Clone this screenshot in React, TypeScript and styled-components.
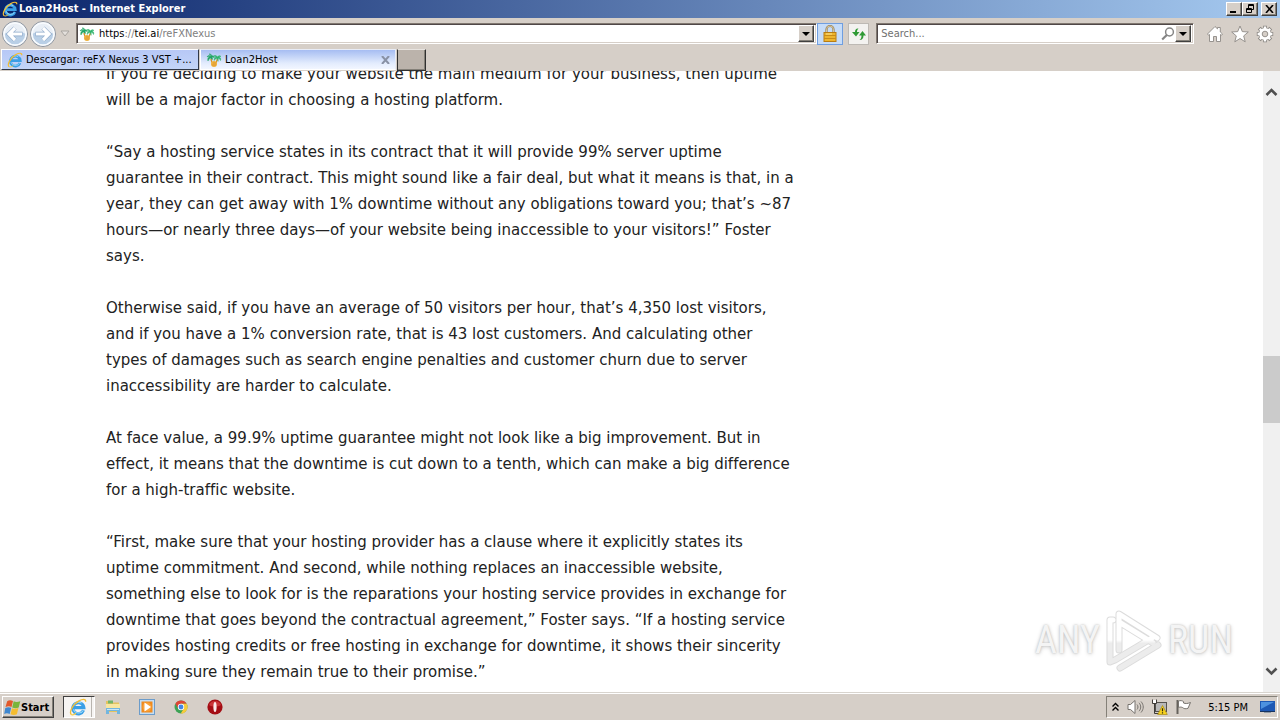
import React from "react";
import styled, { createGlobalStyle, css } from "styled-components";

const face = "#d6cfc8";
const uiFont = `"DejaVu Sans Condensed", "DejaVu Sans", sans-serif`;

const raised = css`
  border: 1px solid;
  border-color: #ffffff #404040 #404040 #ffffff;
  box-shadow: inset -1px -1px 0 #848078;
`;

const GlobalStyle = createGlobalStyle`
  * { box-sizing: border-box; }
  body { margin: 0; background: #ffffff; font-family: ${uiFont}; font-size: 11px; color: #000000; font-variant-ligatures: none; }
  button, input { font: inherit; color: inherit; padding: 0; margin: 0; }
  svg { display: block; flex: none; }
`;

const Desktop = styled.div`
  display: flex;
  flex-direction: column;
  height: 100vh;
  min-width: 900px;
  overflow: hidden;
`;

const TitleBar = styled.header`
  display: flex;
  align-items: center;
  gap: 1px;
  height: 18px;
  padding: 0 3px 0 2px;
  background: linear-gradient(90deg, #0a246a, #a6caf0);
`;

const Title = styled.h1`
  flex: 1;
  margin: 0;
  font-size: 11px;
  line-height: 18px;
  font-weight: bold;
  color: #ffffff;
`;

const WindowButton = styled.button<{ $apart?: boolean }>`
  ${raised}
  display: flex;
  align-items: center;
  justify-content: center;
  width: 16px;
  height: 14px;
  margin-left: ${(p) => (p.$apart ? "2px" : "-1px")};
  background: ${face};
`;

const NavBar = styled.nav`
  display: flex;
  align-items: center;
  height: 31px;
  padding: 0 6px 0 1px;
  background: ${face};
`;

const PlainButton = styled.button`
  display: flex;
  align-items: center;
  justify-content: center;
  border: 0;
  background: none;
`;

const Field = styled.div<{ $grow: number }>`
  display: flex;
  align-items: center;
  flex: ${(p) => p.$grow} 1 0;
  height: 21px;
  padding: 0 2px;
  background: #ffffff;
  border: 1px solid;
  border-color: #807870 #ffffff #ffffff #807870;
  box-shadow: inset 1px 1px 0 #504848, inset -1px -1px 0 ${face};
`;

const Address = styled.div`
  flex: 1;
  padding-left: 4px;
  line-height: 16px;
  color: #808080;
  b { font-weight: normal; color: #000000; }
`;

const SearchInput = styled.input`
  flex: 1;
  min-width: 0;
  border: 0;
  padding-left: 2px;
  outline: 0;
  background: none;
  &::placeholder { color: #707070; opacity: 1; }
`;

const DropButton = styled.button`
  ${raised}
  display: flex;
  align-items: center;
  justify-content: center;
  width: 16px;
  height: 17px;
  background: ${face};
`;

const SquareButton = styled.button<{ $active?: boolean }>`
  display: flex;
  align-items: center;
  justify-content: center;
  width: ${(p) => (p.$active ? "26px" : "21px")};
  height: 22px;
  border: 1px solid ${(p) => (p.$active ? "#6f9ee0" : "#bdb9b4")};
  background: ${(p) => (p.$active ? "#c6dcf8" : "#f3f2f0")};
`;

const Fields = styled.div`
  display: flex;
  align-items: center;
  flex: 1;
`;

const FieldActions = styled.div`
  display: flex;
  gap: 5px;
  padding: 0 7px 0 0;
`;

const Tools = styled.div`
  display: flex;
  gap: 7px;
  padding-left: 12px;
`;

const TabRow = styled.div`
  display: flex;
  height: 22px;
  padding-left: 1px;
  gap: 1px;
  background: ${face};
`;

const Tab = styled.button<{ $selected?: boolean }>`
  display: flex;
  align-items: center;
  gap: 3px;
  width: ${(p) => (p.$selected ? "196px" : "198px")};
  height: 21px;
  padding: 2px 5px;
  text-align: left;
  border: 1px solid;
  border-color: ${(p) => (p.$selected ? "#e8ecf6 #e8ecf6 #ffffff #ffffff" : "#ffffff #303848 #303848 #ffffff")};
  background: ${(p) =>
    p.$selected ? "linear-gradient(#a6bdf2, #e3ecfd 70%, #f2f6ff)" : "linear-gradient(#b7c8f6, #c3d5f8)"};
  span { flex: 1; white-space: nowrap; }
`;

const NewTab = styled.button`
  ${raised}
  width: 29px;
  height: 22px;
  border-color: #303030;
  border-top-color: #e8e4e0;
  background: #bbb3ab;
`;

const Viewport = styled.main`
  position: relative;
  display: flex;
  flex: 1;
  min-height: 0;
  overflow: hidden;
  background: #ffffff;
`;

const Article = styled.article`
  flex: 1;
  margin-top: -10px;
  padding-left: 106px;
  font-family: Verdana, "DejaVu Sans", sans-serif;
  font-size: 15px;
  line-height: 26px;
  color: #222222;
`;

const Paragraph = styled.p`
  margin: 0 0 26px;
  white-space: pre;
`;

const ScrollBar = styled.div`
  display: flex;
  flex-direction: column;
  width: 17px;
  background: #f0f0f0;
`;

const ScrollButton = styled(PlainButton)`
  width: 17px;
  height: 42px;
`;

const Track = styled.div<{ $grow: number }>`
  flex: ${(p) => p.$grow} 1 0;
`;

const Thumb = styled.div`
  height: 67px;
  background: #cbcbcb;
`;

const Watermark = styled.div`
  position: absolute;
  right: 47px;
  bottom: 20px;
  display: flex;
  align-items: center;
  gap: 3px;
  height: 64px;
  font-family: "Roboto Condensed", "Open Sans Condensed", "Liberation Sans", sans-serif;
  font-size: 38px;
  line-height: 64px;
  color: #f4f4f4;
  text-shadow: 0 0 2px #bcbcbc, 0 1px 4px #cccccc;
`;

const TaskBar = styled.footer`
  display: flex;
  align-items: center;
  height: 28px;
  padding: 1px 2px 0;
  border-top: 1px solid #d8d4ce;
  box-shadow: inset 0 1px 0 #ffffff;
  background: ${face};
`;

const StartButton = styled.button`
  ${raised}
  display: flex;
  align-items: center;
  width: 52px;
  height: 22px;
  padding-left: 1px;
  font-weight: bold;
  background: ${face};
`;

const Launchers = styled.div`
  display: flex;
  align-items: center;
  flex: 1;
  gap: 10px;
  padding-left: 9px;
`;

const Launcher = styled(PlainButton)<{ $pressed?: boolean }>`
  width: 24px;
  height: 22px;
  ${(p) =>
    p.$pressed &&
    css`
      width: 32px;
      margin-right: -4px;
      padding-right: 3px;
      border: 1px solid;
      border-color: #404040 #ffffff #ffffff #404040;
      background: linear-gradient(90deg, #f6f4f2 27px, #b8b4ae 27px, #b8b4ae 28px, #f6f4f2 28px);
    `}
`;

const Tray = styled.div`
  display: flex;
  align-items: center;
  gap: 7px;
  height: 22px;
  padding: 0 1px 0 4px;
  border: 1px solid;
  border-color: #848078 #ffffff #ffffff #848078;
`;

const Clock = styled.time`
  padding: 0 4px 0 9px;
  white-space: nowrap;
`;

const IeIcon = ({ size = 16 }: { size?: number }) => (
  <svg width={size} height={size} viewBox="0 0 16 16" fill="none">
    <path d="M12.900 10.900A4.900 4.900 0 1 1 13.200 8.600H4.6" stroke="#3a9fe6" strokeWidth="2.800" />
    <path d="M12.700 11.100a4.900 4.900 0 0 1-8.800-1M4 7a4.900 4.900 0 0 1 7.200-2.400" stroke="#9bdcfb" strokeWidth=".9" />
    <path d="M2.400 14.800C-.8 13.700 3.400 5.500 8.800 2.600 11.900.9 15.100.5 14.800 3.300" stroke="#f2bd35" strokeWidth="1.200" />
    <path d="M2.400 14.800c1.200.5 2.700-.3 3.900-1.200" stroke="#f5cd45" strokeWidth="1" />
  </svg>
);

const PalmIcon = () => (
  <svg width="16" height="16" viewBox="0 0 16 16" fill="none">
    <path d="M5 4.500C3.500 3 1.500 3.500 1 5c1.200-.6 2-.5 2.600-.2C2 5.500 1.300 7 2 9c.7-1.800 1.700-2.700 2.700-3 .6.700.8 1.700.6 3C6.800 7.500 6.800 6 6 5c.9-.3 1.700 0 2.300.9C8.300 4.200 7 3.300 5.700 3.800 5.600 2.500 4.500 1.700 3 2c1.200.6 1.900 1.400 2 2.500z" fill="#22a565" stroke="#22a565" strokeWidth=".5" />
    <path d="M11.500 5c-.9-1.700-2.700-2-4-1 1.200.1 2.200.6 2.800 1.300C8.700 5.500 7.900 6.900 8.200 8.500c.8-1.400 1.700-2 2.700-2.200-.1 1.200.3 2.200 1.200 3 .3-1.200.2-2.100-.2-3 1.300.1 2.100.8 2.600 2.200.8-2-.2-3.300-1.900-3.500.7-.6 1.400-.7 2.400-.4-.8-1.300-2.500-1.300-3.500.4z" fill="#2fb46c" stroke="#2fb46c" strokeWidth=".5" />
    <path d="M5 7c.2 2.300 1 4 2.500 5.500M11 7.500c0 2-.8 3.700-2.200 5" stroke="#d9932d" strokeWidth="1.300" />
    <circle cx="8" cy="12" r="3" fill="#efb13b" />
    <path d="M6 13h4M7 11h3" stroke="#d8953a" strokeWidth=".8" />
  </svg>
);

const ArrowDisc = ({ forward }: { forward?: boolean }) => (
  <svg width="28" height="28" viewBox="0 0 28 28" fill="none">
    <circle cx="14" cy="14" r="12.500" fill="#e9eff6" stroke="#8d949e" />
    <path d="M3 14a11 11 0 0 0 22 0c-5-3-17-3-22 0z" fill="#b9cfe6" />
    <circle cx="14" cy="14" r="11" stroke="#f8fbfe" strokeWidth="1.500" />
    <g transform={forward ? "matrix(-1 0 0 1 28 0)" : undefined}>
      <path d="M21.500 14H9M14 8l-6 6 6 6" stroke="#8da8c8" strokeWidth="4.400" />
      <path d="M21 14H9M14 8l-6 6 6 6" stroke="#ffffff" strokeWidth="3.200" />
    </g>
  </svg>
);

const DownTriangle = () => (
  <svg width="8" height="4" viewBox="0 0 8 4"><path d="M0 0h8L4 4z" /></svg>
);

const Chevron = ({ down }: { down?: boolean }) => (
  <svg width="13" height="9" viewBox="0 0 13 9" fill="none">
    <path d={down ? "M1.500 1.500l5 5 5-5" : "M1.500 7l5-5 5 5"} stroke="#505050" strokeWidth="2.600" />
  </svg>
);

const LockIcon = () => (
  <svg width="14" height="17" viewBox="0 0 14 17" fill="none">
    <path d="M3.500 8V4.500a3.500 3.500 0 0 1 7 0V8" stroke="#96815a" strokeWidth="2.200" />
    <path d="M3.500 8V4.500a3.500 3.500 0 0 1 7 0V8" stroke="#e7d7a9" strokeWidth=".8" />
    <rect x="1" y="7.500" width="12" height="9" fill="#eeb52e" stroke="#b87c12" />
    <path d="M1 10.500h12M1 13.500h12" stroke="#c98c18" />
    <path d="M3 9h6" stroke="#fbe28a" />
  </svg>
);

const RefreshIcon = () => (
  <svg width="16" height="16" viewBox="0 0 16 16" fill="none">
    <path d="M7.500 2.500C5.500 2 4 3.500 4 6H1l4 4.500L8.500 6H6c0-1.500.4-2.700 1.500-3.500z" fill="#2f9a35" />
    <path d="M8.500 14c2.500.2 4-1.500 4-4.500H15L11.500 5 8 9.500h2.500c0 2-.6 3.500-2 4.500z" fill="#2f9a35" />
  </svg>
);

const MagnifierIcon = () => (
  <svg width="14" height="14" viewBox="0 0 14 14" fill="none" stroke="#858585">
    <circle cx="8.500" cy="5" r="3.900" strokeWidth="1.500" />
    <path d="M5.800 8L1.200 12.500" strokeWidth="2.200" />
  </svg>
);

const toolPaths = {
  home: "M1.500 9L9 1.500l2.500 2.400V2.500h2.800V7l2.200 2-1.200 1.300-.8-.8v7h-4v-5h-3v5h-4v-7l-.8.8z",
  star: "M9 1l2.300 5.600 6 .4-4.600 3.900 1.500 5.900L9 13.500l-5.200 3.300 1.500-5.900L.7 7l6-.4z",
};

const ToolIcon = ({ name }: { name: "home" | "star" }) => (
  <svg width="18" height="18" viewBox="0 0 18 18">
    <path d={toolPaths[name]} fill="#ffffff" stroke="#8d8984" strokeWidth=".9" />
  </svg>
);

const GearIcon = () => (
  <svg width="18" height="18" viewBox="0 0 18 18" fill="none">
    <g stroke="#8d8984" strokeWidth="4">
      <path d="M9 .8v16.400M.8 9h16.400M3.200 3.200l11.600 11.600M14.800 3.200L3.200 14.800" />
    </g>
    <circle cx="9" cy="9" r="6.500" fill="#8d8984" />
    <path d="M9 1.600v14.800M1.600 9h14.800M3.800 3.800l10.400 10.400M14.200 3.800L3.800 14.200" stroke="#ffffff" strokeWidth="2.400" />
    <circle cx="9" cy="9" r="4.500" stroke="#ffffff" strokeWidth="2.800" />
    <circle cx="9" cy="9" r="2.800" fill="#d6cfc8" stroke="#8d8984" strokeWidth=".9" />
  </svg>
);

const WindowsFlag = () => (
  <svg width="17" height="17" viewBox="0 0 17 17">
    <path d="M3.200 2.200C5 1 6.800 1 9 2L7.500 8C5.500 7 3.800 7.100 1.500 8.100z" fill="#e2592b" />
    <path d="M9.700 2.300c2 1 4 .9 6.600-.1l-1.600 6.300c-2.200 1-4.100 1-6.500 0z" fill="#79b53c" />
    <path d="M1.300 8.900c2.200-1 4-1 5.900-.1l-1.500 6.100c-2-.9-3.800-.9-5.500.1z" fill="#3f87cf" />
    <path d="M8 9.200c2.100.9 4 .9 6.400-.1l-1.500 6.200c-2.200 1-4.200.9-6.400 0z" fill="#f5bd30" />
  </svg>
);

const FolderIcon = () => (
  <svg width="18" height="18" viewBox="0 0 18 18">
    <path d="M2 3h5l1 1.500h7V14H2z" fill="#e4c35f" />
    <path d="M4 2.500h5v3H4z" fill="#72b569" />
    <path d="M2 6h14v5H2z" fill="#f8e6a0" />
    <path d="M2 10h14v6h-3v-3H5v3H2z" fill="#72b6df" />
    <path d="M3 11h12v1H3z" fill="#c9e7f8" />
  </svg>
);

const MediaIcon = () => (
  <svg width="18" height="18" viewBox="0 0 18 18">
    <rect x="1.500" y="1.500" width="15" height="15" fill="#c5ddf2" stroke="#6c9cca" />
    <rect x="3.500" y="3.500" width="11" height="11" fill="#f08a1d" />
    <circle cx="9" cy="9" r="4.500" fill="#f9a23a" />
    <path d="M6.500 4.500v9l6.500-4.500z" fill="#ffffff" />
  </svg>
);

const ChromeIcon = () => (
  <svg width="16" height="16" viewBox="0 0 16 16">
    <circle cx="8" cy="8" r="6.500" fill="#3da255" />
    <path d="M2.400 4.700A6.500 6.500 0 0 1 13.700 4.800H8L5.200 9.600z" fill="#de4536" />
    <path d="M13.700 4.800A6.500 6.500 0 0 1 7.700 14.500L10.800 9.600 8 4.800z" fill="#f7cb3b" />
    <circle cx="8" cy="8" r="3.200" fill="#ffffff" />
    <circle cx="8" cy="8" r="2.400" fill="#4285e4" />
  </svg>
);

const OperaIcon = () => (
  <svg width="16" height="16" viewBox="0 0 16 16">
    <circle cx="8" cy="8" r="7.600" fill="#a40d14" />
    <path d="M2 6a6.500 6.500 0 0 1 12 0c-3 2-9 2-12 0z" fill="#c93438" />
    <ellipse cx="8" cy="8" rx="1.600" ry="5" fill="#fbeaea" />
  </svg>
);

const SpeakerIcon = () => (
  <svg width="17" height="16" viewBox="0 0 17 16" fill="none" stroke="#77736e">
    <path d="M1 5.500h2.500L8 1.500v13l-4.500-4H1z" fill="#ffffff" />
    <path d="M10 5.500c1.300 1.500 1.300 3.500 0 5M12 3.800c2.300 2.500 2.300 5.900 0 8.400M14 2.500c3 3.500 3 7.500 0 11" />
  </svg>
);

const NetworkIcon = () => (
  <svg width="17" height="16" viewBox="0 0 17 16" fill="none">
    <rect x="4.500" y="3.500" width="11" height="9" fill="#b8b8b8" stroke="#55524e" />
    <path d="M1.500.5v4h4v-4M3.500 1v3M3.500 4.500v10H8" stroke="#3e3b38" />
    <path d="M2 1h3v3H2z" fill="#ffffff" />
    <path d="M11.500 6.500l4.800 9H6.700z" fill="#f7d21e" stroke="#a78a12" strokeWidth=".7" />
    <path d="M11.500 9.300v3M11.500 13.300v1.200" stroke="#302a10" strokeWidth="1.200" />
  </svg>
);

const FlagIcon = () => (
  <svg width="17" height="16" viewBox="0 0 17 16" fill="none">
    <path d="M2.500 1v14" stroke="#66625d" strokeWidth="2" />
    <path d="M3.500 2c2-.7 3.500-.5 5 .6V4c2 .8 4.200.7 7-.5l-2.500 5.800c-2.500.8-4 .5-5.500-.8-1.500-.6-2.700-.5-4 0z" fill="#ffffff" stroke="#77736e" />
  </svg>
);

const DesktopIcon = () => (
  <svg width="17" height="16" viewBox="0 0 17 16">
    <path d="M1 2h15v10H1z" fill="#1d58b4" />
    <path d="M2 3h13L2 10z" fill="#4d91df" />
    <path d="M1 12h15v1H1z" fill="#17335f" />
    <path d="M5 13h7v1H5z" fill="#8f99a6" />
  </svg>
);

const PlayMark = () => (
  <svg width="62" height="64" viewBox="0 0 62 64" fill="none" strokeLinejoin="round" strokeLinecap="round">
    <defs>
      <linearGradient id="markFill" gradientUnits="userSpaceOnUse" x1="0" y1="0" x2="0" y2="64">
        <stop offset=".5" stopColor="#ffffff" />
        <stop offset=".55" stopColor="#ececec" />
      </linearGradient>
    </defs>
    <g stroke="#dcdcdc" strokeWidth="7">
      <path d="M10 12H7v42l5-2 37-22" />
      <path d="M16 42V6l38 24M16 14l34 21" />
      <path d="M17 60l38-23" />
    </g>
    <g stroke="url(#markFill)" strokeWidth="5">
      <path d="M10 12H7v42l5-2 37-22" />
      <path d="M16 42V6l38 24M16 14l34 21" />
      <path d="M17 60l38-23" />
    </g>
  </svg>
);

const paragraphs = [
  `If you’re deciding to make your website the main medium for your business, then uptime
will be a major factor in choosing a hosting platform.`,
  `“Say a hosting service states in its contract that it will provide 99% server uptime
guarantee in their contract. This might sound like a fair deal, but what it means is that, in a
year, they can get away with 1% downtime without any obligations toward you; that’s ~87
hours—or nearly three days—of your website being inaccessible to your visitors!” Foster
says.`,
  `Otherwise said, if you have an average of 50 visitors per hour, that’s 4,350 lost visitors,
and if you have a 1% conversion rate, that is 43 lost customers. And calculating other
types of damages such as search engine penalties and customer churn due to server
inaccessibility are harder to calculate.`,
  `At face value, a 99.9% uptime guarantee might not look like a big improvement. But in
effect, it means that the downtime is cut down to a tenth, which can make a big difference
for a high-traffic website.`,
  `“First, make sure that your hosting provider has a clause where it explicitly states its
uptime commitment. And second, while nothing replaces an inaccessible website,
something else to look for is the reparations your hosting service provides in exchange for
downtime that goes beyond the contractual agreement,” Foster says. “If a hosting service
provides hosting credits or free hosting in exchange for downtime, it shows their sincerity
in making sure they remain true to their promise.”`,
];

export default function App() {
  return (
    <Desktop>
      <GlobalStyle />
      <TitleBar>
        <IeIcon />
        <Title>Loan2Host - Internet Explorer</Title>
        <WindowButton aria-label="Minimize">
          <svg width="10" height="8" viewBox="0 0 10 8"><path d="M1 6h6v2H1z" /></svg>
        </WindowButton>
        <WindowButton aria-label="Restore">
          <svg width="10" height="10" viewBox="0 0 10 10" fill="none" stroke="#000000">
            <path d="M3.500 4V.5h5v5H7M3 1.500h6M1.500 4.500h5v4h-5zM1 5.500h6" />
          </svg>
        </WindowButton>
        <WindowButton aria-label="Close" $apart>
          <svg width="9" height="8" viewBox="0 0 9 8"><path d="M1 0l7 8M8 0L1 8" stroke="#000000" strokeWidth="1.600" /></svg>
        </WindowButton>
      </TitleBar>
      <NavBar>
        <PlainButton aria-label="Back"><ArrowDisc /></PlainButton>
        <PlainButton aria-label="Forward"><ArrowDisc forward /></PlainButton>
        <PlainButton aria-label="Recent pages">
          <svg width="19" height="7" viewBox="0 0 19 7"><path d="M4 1h8L8 6z" fill="#e4e0dc" stroke="#aaa6a1" /></svg>
        </PlainButton>
        <Fields>
          <Field $grow={743}>
            <PalmIcon />
            <Address><b>https</b>://<b>tei.ai</b>/reFXNexus</Address>
            <DropButton aria-label="Show addresses"><DownTriangle /></DropButton>
          </Field>
          <FieldActions>
            <SquareButton aria-label="Security report" $active><LockIcon /></SquareButton>
            <SquareButton aria-label="Refresh"><RefreshIcon /></SquareButton>
          </FieldActions>
          <Field $grow={315}>
            <SearchInput aria-label="Search" placeholder="Search..." />
            <PlainButton aria-label="Run search"><MagnifierIcon /></PlainButton>
            <DropButton aria-label="Search providers"><DownTriangle /></DropButton>
          </Field>
        </Fields>
        <Tools>
          <PlainButton aria-label="Home"><ToolIcon name="home" /></PlainButton>
          <PlainButton aria-label="Favorites"><ToolIcon name="star" /></PlainButton>
          <PlainButton aria-label="Tools"><GearIcon /></PlainButton>
        </Tools>
      </NavBar>
      <TabRow>
        <Tab><IeIcon /><span>Descargar: reFX Nexus 3 VST +...</span></Tab>
        <Tab $selected>
          <PalmIcon />
          <span>Loan2Host</span>
          <svg width="9" height="8" viewBox="0 0 9 8"><path d="M1 0l7 8M8 0L1 8" stroke="#8991a5" strokeWidth="2" /></svg>
        </Tab>
        <NewTab aria-label="New tab" />
      </TabRow>
      <Viewport>
        <Article>
          {paragraphs.map((text) => (
            <Paragraph key={text}>{text}</Paragraph>
          ))}
        </Article>
        <ScrollBar>
          <ScrollButton aria-label="Scroll up"><Chevron /></ScrollButton>
          <Track $grow={243} />
          <Thumb />
          <Track $grow={227} />
          <ScrollButton aria-label="Scroll down"><Chevron down /></ScrollButton>
        </ScrollBar>
        <Watermark>
          <span>ANY</span>
          <PlayMark />
          <span>RUN</span>
        </Watermark>
      </Viewport>
      <TaskBar>
        <StartButton><WindowsFlag />Start</StartButton>
        <Launchers>
          <Launcher aria-label="Internet Explorer" $pressed><IeIcon size={18} /></Launcher>
          <Launcher aria-label="File Explorer"><FolderIcon /></Launcher>
          <Launcher aria-label="Media Player"><MediaIcon /></Launcher>
          <Launcher aria-label="Chrome"><ChromeIcon /></Launcher>
          <Launcher aria-label="Opera"><OperaIcon /></Launcher>
        </Launchers>
        <Tray>
          <PlainButton aria-label="Show hidden icons">
            <svg width="9" height="10" viewBox="0 0 9 10" fill="none" stroke="#000000" strokeWidth="1.400">
              <path d="M1.500 4.500l3-3 3 3M1.500 8.500l3-3 3 3" />
            </svg>
          </PlainButton>
          <SpeakerIcon />
          <NetworkIcon />
          <FlagIcon />
          <Clock>5:15 PM</Clock>
          <DesktopIcon />
        </Tray>
      </TaskBar>
    </Desktop>
  );
}
